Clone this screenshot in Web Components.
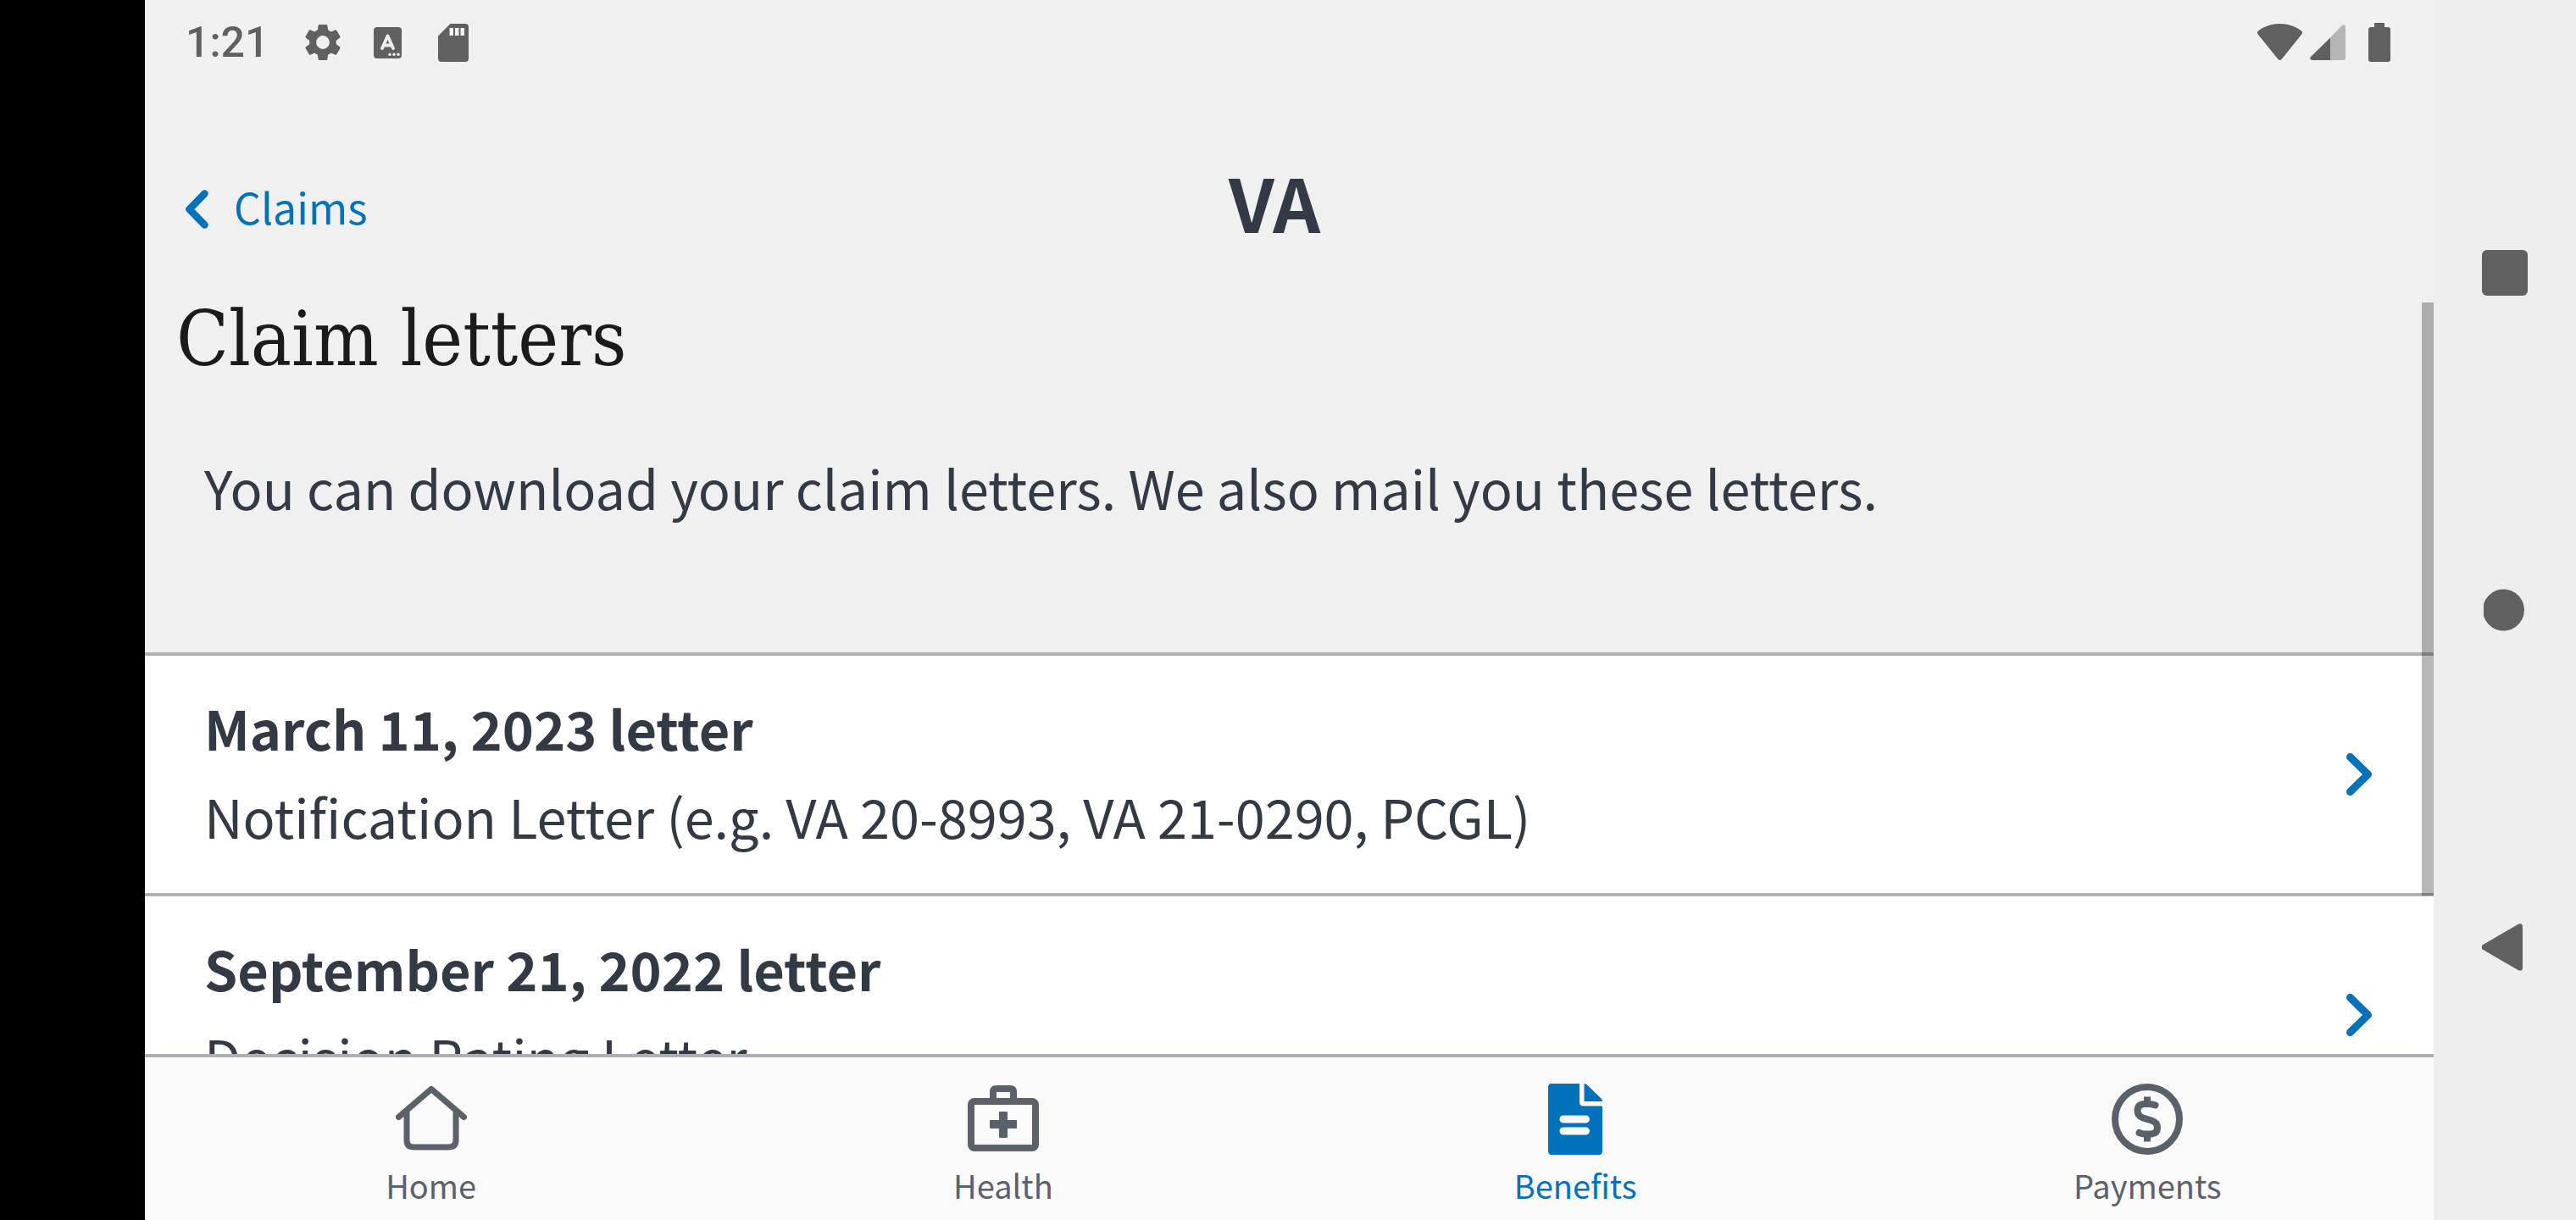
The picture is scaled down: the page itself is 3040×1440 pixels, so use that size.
<!DOCTYPE html>
<html lang="en">
<head>
<meta charset="utf-8">
<title>Claim letters</title>
<style>
  html, body { margin: 0; height: 100%; }
  body {
    overflow: hidden;
    background: #000;
    color: #323a45;
    font-family: "Noto Sans CJK SC", "Open Sans", sans-serif;
    --link: #0071bb;
    --line: #afaeb5;
    --muted: #5b616b;
    --system: #606060;
  }
</style>
</head>
<body>
<va-device>
  <status-bar></status-bar>
  <screen-header back="Claims"></screen-header>
  <scroll-area>
    <page-intro heading="Claim letters">You can download your claim letters. We also mail you these letters.</page-intro>
    <letter-list>
      <letter-row date="March 11, 2023 letter">Notification Letter (e.g. VA 20-8993, VA 21-0290, PCGL)</letter-row>
      <letter-row date="September 21, 2022 letter">Decision Rating Letter</letter-row>
    </letter-list>
  </scroll-area>
  <tab-bar>
    <tab-item icon="home">Home</tab-item>
    <tab-item icon="health">Health</tab-item>
    <tab-item icon="benefits" active>Benefits</tab-item>
    <tab-item icon="payments">Payments</tab-item>
  </tab-bar>
  <system-nav slot="nav"></system-nav>
</va-device>

<script>
const define = (name, render) => customElements.define(name, class extends HTMLElement {
  constructor() {
    super();
    this.attachShadow({ mode: 'open' }).innerHTML = render(this);
  }
});

define('va-device', () => `
  <style>
    :host { display: flex; height: 100vh; padding-left: 171px; box-sizing: border-box; }
    main { flex: 1; min-width: 0; display: flex; flex-direction: column; background: #f0f0f0; }
  </style>
  <main><slot></slot></main>
  <slot name="nav"></slot>`);

define('status-bar', () => `
  <style>
    :host { display: flex; justify-content: space-between; align-items: center; height: 100px; padding: 0 51px 0 48px; color: var(--system); font: 500 50px/60px Roboto, sans-serif; }
    div { display: flex; align-items: center; }
    svg { display: block; fill: currentColor; }
    .gear { margin-left: 42px; }
    .input { margin-left: 38px; }
    .card { margin-left: 43px; }
    .signal { margin-left: 9px; }
    .battery { margin-left: 27px; }
  </style>
  <div>
    <span>1:21</span>
    <svg class="gear" width="44" height="44" viewBox="2 2 20 20"><path d="M19.14 12.94c.04-.3.06-.61.06-.94 0-.32-.02-.64-.07-.94l2.03-1.58c.18-.14.23-.41.12-.61l-1.92-3.32c-.12-.22-.37-.29-.59-.22l-2.39.96c-.5-.38-1.03-.7-1.62-.94l-.36-2.54c-.04-.24-.24-.41-.48-.41h-3.84c-.24 0-.43.17-.47.41l-.36 2.54c-.59.24-1.13.57-1.62.94l-2.39-.96c-.22-.08-.47 0-.59.22L2.74 8.87c-.12.21-.08.47.12.61l2.03 1.58c-.05.3-.09.63-.09.94s.02.64.07.94l-2.03 1.58c-.18.14-.23.41-.12.61l1.92 3.32c.12.22.37.29.59.22l2.39-.96c.5.38 1.03.7 1.62.94l.36 2.54c.05.24.24.41.48.41h3.84c.24 0 .44-.17.47-.41l.36-2.54c.59-.24 1.13-.56 1.62-.94l2.39.96c.22.08.47 0 .59-.22l1.92-3.32c.12-.22.07-.47-.12-.61l-2.01-1.58zM12 15.6A3.6 3.6 0 1 1 12 8.4a3.6 3.6 0 0 1 0 7.2z"/></svg>
    <svg class="input" width="33" height="37" viewBox="0 0 33 37"><rect width="33" height="37" rx="4"/><path d="M10 25 16.500 10.500 23 25M12.500 21.500h8" fill="none" stroke="#f0f0f0" stroke-width="3.800" stroke-linecap="round" stroke-linejoin="round"/><g fill="#f0f0f0"><circle cx="19" cy="32.300" r="1.700"/><circle cx="24" cy="32.300" r="1.700"/><circle cx="29" cy="32.300" r="1.700"/></g></svg>
    <svg class="card" width="36" height="45" viewBox="0 0 36 45"><path d="M14.500 0H32a4 4 0 0 1 4 4v37a4 4 0 0 1-4 4H4a4 4 0 0 1-4-4V14.500z"/><path d="M13.500 5h4.500v9h-4.500zM20 5h4.500v9H20zM26.500 5H31v9h-4.500z" fill="#f0f0f0"/></svg>
  </div>
  <div>
    <svg width="53" height="44" viewBox="0 0 53 44"><path d="M1 8.500C8 3 17 0 26.500 0S45 3 52 8.500q2 2 .3 4L28.500 42q-2 2.200-4 0L.7 12.500q-1.700-2 .3-4z"/></svg>
    <svg class="signal" width="42" height="42" viewBox="0 0 42 42"><path d="M24 15.500 37.500 1.200Q42-1.500 42 3v36.500q0 2.500-2.500 2.500H24z" fill="#b6b6b6"/><path d="M24 15.500V42H3q-4.500-.5-2-4z"/></svg>
    <svg class="battery" width="26" height="46" viewBox="0 0 26 46"><path d="M7 0h12v5h4q3 0 3 3v35q0 3-3 3H3q-3 0-3-3V8q0-3 3-3h4z"/></svg>
  </div>`);

define('screen-header', el => `
  <style>
    :host { display: grid; grid-template-columns: 1fr auto 1fr; align-items: center; height: 208px; padding: 39px 82px 0 47px; font-size: 50px; line-height: 70px; }
    a { display: flex; align-items: center; gap: 30px; justify-self: start; color: var(--link); text-decoration: none; }
    svg { display: block; padding-top: 8px; }
    strong { padding-bottom: 12px; font-weight: 700; font-size: 87px; line-height: 96px; }
  </style>
  <a href="#claims"><svg width="28" height="46" viewBox="0 0 28 46" fill="none" stroke="currentColor" stroke-width="8.500" stroke-linejoin="round" stroke-linecap="round"><path d="M23.500 4.500 5.500 23l18 18.500"/></svg><span>${el.getAttribute('back')}</span></a>
  <strong>VA</strong>`);

define('scroll-area', () => `
  <style>
    :host { display: block; flex: 1; min-height: 0; overflow: hidden; position: relative; }
    i { position: absolute; right: 0; top: 10px; width: 14px; height: 700px; background: rgba(0, 0, 0, .28); }
  </style>
  <slot></slot><i></i>`);

define('page-intro', el => `
  <style>
    :host { display: block; padding: 10px 70px 153px; }
    h1 { margin: 0 -33px 90px; color: #1b1b1b; font: 400 90px/86px "DejaVu Serif Condensed", "DejaVu Serif", serif; }
    p { margin: 0; font-size: 63px; line-height: 84px; }
  </style>
  <h1>${el.getAttribute('heading')}</h1>
  <p><slot></slot></p>`);

define('letter-list', () => `
  <style>:host { display: block; border-top: 4px solid var(--line); background: #fff; }</style>
  <slot></slot>`);

define('letter-row', el => `
  <style>
    :host { display: block; border-bottom: 4px solid var(--line); }
    button { all: unset; box-sizing: border-box; display: flex; align-items: center; justify-content: space-between; width: 100%; height: 280px; padding: 0 72px 0 70px; cursor: pointer; }
    .text { display: flex; flex-direction: column; padding-bottom: 6px; font-size: 63px; line-height: 104px; }
    svg { display: block; color: var(--link); }
  </style>
  <button type="button">
    <span class="text"><b>${el.getAttribute('date')}</b><span><slot></slot></span></span>
    <svg width="32" height="52" viewBox="0 0 32 52" fill="none" stroke="currentColor" stroke-width="9" stroke-linejoin="round" stroke-linecap="round"><path d="M5.500 5.500 26.500 26 5.500 46.500"/></svg>
  </button>`);

define('tab-bar', () => `
  <style>
    :host { display: block; border-top: 4px solid var(--line); background: #f9f9f9; }
    nav { display: grid; grid-template-columns: repeat(4, 1fr); height: 192px; }
  </style>
  <nav><slot></slot></nav>`);

const icons = {
  home: `<g fill="none" stroke="currentColor" stroke-width="7" stroke-linecap="round" stroke-linejoin="round"><path d="M3.500 39.500 42 6.500l38.500 33"/><path d="M13 33v34q0 8 9 8h40q9 0 9-8V33" stroke-linecap="butt"/></g>`,
  health: `<g fill="none" stroke="currentColor" stroke-width="8"><rect x="4" y="21" width="76" height="55" rx="4"/><path d="M30 20V10q0-4 4-4h16q4 0 4 4v10"/></g><path d="M38 33h8q1 0 1 1v9h10q1 0 1 1v8q0 1-1 1H47v10q0 1-1 1h-8q-1 0-1-1V53H27q-1 0-1-1v-8q0-1 1-1h10v-9q0-1 1-1z"/>`,
  benefits: `<path fill-rule="evenodd" d="M14 0h33v21.500q0 5 4.500 5H74V80q0 4-4 4H14q-4 0-4-4V4q0-4 4-4zm14 37.500a4.500 4.500 0 0 0 0 9h26.500a4.500 4.500 0 0 0 0-9zm0 14a4.500 4.500 0 0 0 0 9h26.500a4.500 4.500 0 0 0 0-9z"/><path d="M52.500 0q2 0 3.500 1.500l16 15.500q2 2 2 4H52.500z"/>`,
  payments: `<g fill="none" stroke="currentColor" stroke-width="8"><circle cx="42" cy="42" r="38"/><path d="M51.500 25.500Q47 24 42.500 24H39Q30.500 24.500 30.500 32q0 6 6.500 8.500l10.500 3.200q6.500 2.300 6.500 8.300 0 7-7.500 7.500H39q-3 0-6.500-1.500" stroke-linecap="round"/><path d="M42 26V15.500M42 68.500V58" stroke-linecap="butt"/></g>`
};

define('tab-item', el => `
  <style>
    :host { display: block; color: var(--muted); }
    :host([active]) { color: var(--link); }
    a { display: flex; flex-direction: column; align-items: center; gap: 8px; padding-top: 31px; color: inherit; text-decoration: none; font-size: 38px; line-height: 56px; }
    svg { display: block; fill: currentColor; }
  </style>
  <a href="#${el.getAttribute('icon')}"><svg width="84" height="84" viewBox="0 0 84 84">${icons[el.getAttribute('icon')]}</svg><span><slot></slot></span></a>`);

define('system-nav', () => `
  <style>
    :host { display: flex; flex-direction: column; justify-content: center; gap: 314px; width: 168px; background: #eee; color: var(--system); }
    button { all: unset; display: flex; justify-content: center; height: 84px; align-items: center; cursor: pointer; }
    svg { display: block; fill: currentColor; }
  </style>
  <button type="button" aria-label="Overview"><svg width="54" height="54" viewBox="0 0 54 54"><rect width="54" height="54" rx="6"/></svg></button>
  <button type="button" aria-label="Home"><svg width="54" height="50" viewBox="-1 0 54 50"><path d="M1 18A24.500 24.500 0 1 1 1 32z"/></svg></button>
  <button type="button" aria-label="Back"><svg width="54" height="56" viewBox="1 0 54 56"><path d="M1.500 25.500 44 .8q5-1.800 5 3.200v48q0 5-5 3.200L1.500 30.500q-3-2.500 0-5z"/></svg></button>`);
</script>
</body>
</html>
